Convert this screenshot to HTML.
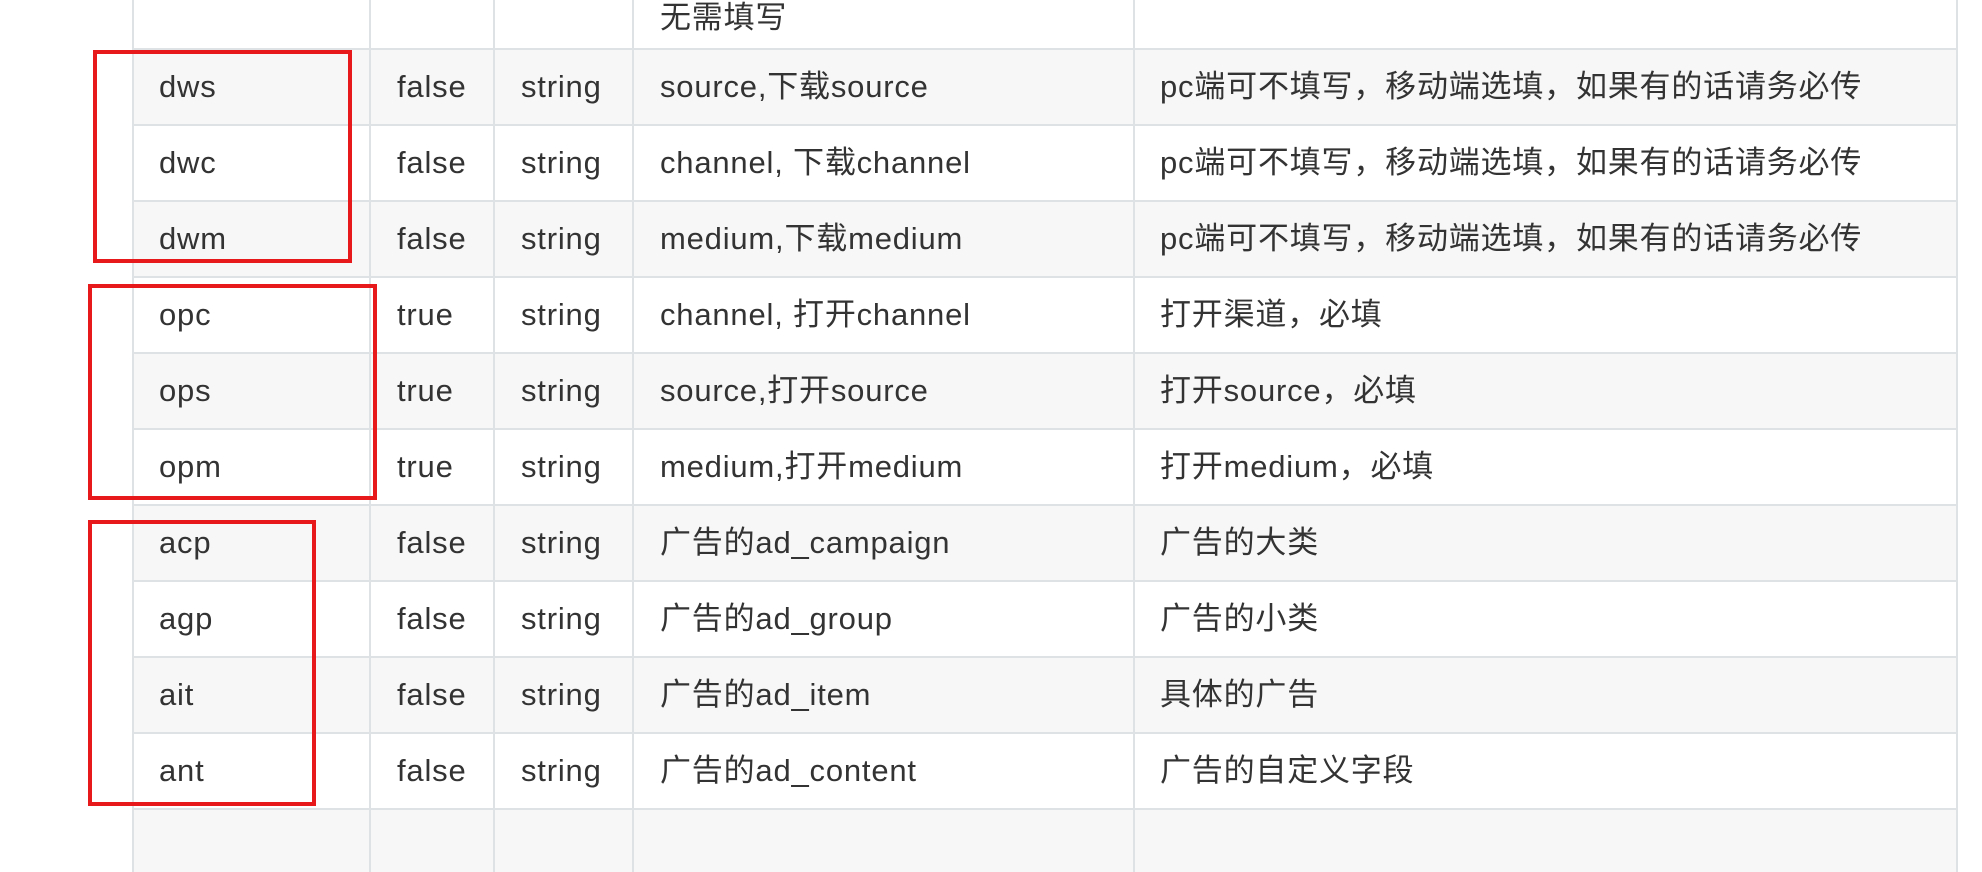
<!DOCTYPE html>
<html><head><meta charset="utf-8"><style>
html,body{margin:0;padding:0;width:1982px;height:872px;overflow:hidden;background:#fff;}
body{position:relative;font-family:"Liberation Sans","Noto Sans CJK SC",sans-serif;color:#333;font-size:31px;letter-spacing:0.8px;}
.row{position:absolute;left:133px;width:1824px;height:76px;border-top:2px solid #dfe2e5;box-sizing:border-box;}
.g{background:#f7f7f7;}
.vl{position:absolute;top:0;width:2px;height:872px;background:#dfe2e5;}
.t{position:absolute;line-height:74px;white-space:nowrap;}
.box{position:absolute;border:4px solid #e8191a;box-sizing:border-box;}
</style></head><body>
<div class="row g" style="top:48px"><span class="t" style="left:26px">dws</span><span class="t" style="left:264px">false</span><span class="t" style="left:388px">string</span><span class="t" style="left:527px">source,下载source</span><span class="t" style="left:1027px">pc端可不填写，移动端选填，如果有的话请务必传</span></div>
<div class="row" style="top:124px"><span class="t" style="left:26px">dwc</span><span class="t" style="left:264px">false</span><span class="t" style="left:388px">string</span><span class="t" style="left:527px">channel, 下载channel</span><span class="t" style="left:1027px">pc端可不填写，移动端选填，如果有的话请务必传</span></div>
<div class="row g" style="top:200px"><span class="t" style="left:26px">dwm</span><span class="t" style="left:264px">false</span><span class="t" style="left:388px">string</span><span class="t" style="left:527px">medium,下载medium</span><span class="t" style="left:1027px">pc端可不填写，移动端选填，如果有的话请务必传</span></div>
<div class="row" style="top:276px"><span class="t" style="left:26px">opc</span><span class="t" style="left:264px">true</span><span class="t" style="left:388px">string</span><span class="t" style="left:527px">channel, 打开channel</span><span class="t" style="left:1027px">打开渠道，必填</span></div>
<div class="row g" style="top:352px"><span class="t" style="left:26px">ops</span><span class="t" style="left:264px">true</span><span class="t" style="left:388px">string</span><span class="t" style="left:527px">source,打开source</span><span class="t" style="left:1027px">打开source，必填</span></div>
<div class="row" style="top:428px"><span class="t" style="left:26px">opm</span><span class="t" style="left:264px">true</span><span class="t" style="left:388px">string</span><span class="t" style="left:527px">medium,打开medium</span><span class="t" style="left:1027px">打开medium，必填</span></div>
<div class="row g" style="top:504px"><span class="t" style="left:26px">acp</span><span class="t" style="left:264px">false</span><span class="t" style="left:388px">string</span><span class="t" style="left:527px">广告的ad_campaign</span><span class="t" style="left:1027px">广告的大类</span></div>
<div class="row" style="top:580px"><span class="t" style="left:26px">agp</span><span class="t" style="left:264px">false</span><span class="t" style="left:388px">string</span><span class="t" style="left:527px">广告的ad_group</span><span class="t" style="left:1027px">广告的小类</span></div>
<div class="row g" style="top:656px"><span class="t" style="left:26px">ait</span><span class="t" style="left:264px">false</span><span class="t" style="left:388px">string</span><span class="t" style="left:527px">广告的ad_item</span><span class="t" style="left:1027px">具体的广告</span></div>
<div class="row" style="top:732px"><span class="t" style="left:26px">ant</span><span class="t" style="left:264px">false</span><span class="t" style="left:388px">string</span><span class="t" style="left:527px">广告的ad_content</span><span class="t" style="left:1027px">广告的自定义字段</span></div>
<div class="row g" style="top:808px;height:64px"></div>
<span class="t" style="left:660px;top:-19px">无需填写</span>
<div class="vl" style="left:132px"></div>
<div class="vl" style="left:369px"></div>
<div class="vl" style="left:493px"></div>
<div class="vl" style="left:632px"></div>
<div class="vl" style="left:1133px"></div>
<div class="vl" style="left:1956px"></div>
<div class="box" style="left:93px;top:50px;width:259px;height:213px"></div>
<div class="box" style="left:88px;top:284px;width:289px;height:216px"></div>
<div class="box" style="left:88px;top:520px;width:228px;height:286px"></div>
</body></html>
